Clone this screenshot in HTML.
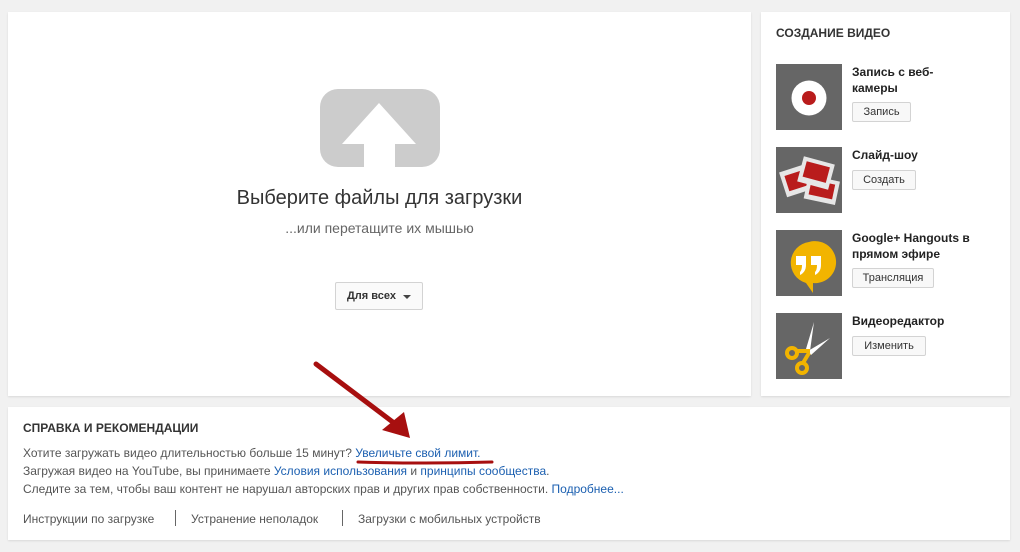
<!DOCTYPE html>
<html><head><meta charset="utf-8"><style>
body{margin:0;width:1020px;height:552px;background:#f1f1f1;font-family:"Liberation Sans",Arial,sans-serif;position:relative;overflow:hidden;color:#333}
.p{position:absolute;background:#fff;box-shadow:0 1px 2px rgba(0,0,0,.1)}
.a{position:absolute;white-space:nowrap}
.btn{position:absolute;border:1px solid #d3d3d3;background:#f8f8f8;border-radius:2px;font-size:11px;color:#333;text-align:center;box-sizing:border-box;line-height:18px;height:20px}
.th{position:absolute;left:776px;width:66px;height:66px;background:#666}
.lbl{position:absolute;left:852px;font-size:12px;font-weight:bold;color:#222;line-height:16px}
a{color:#1b5fb0;text-decoration:none}
.t{font-size:12px;color:#555}
</style></head><body>
<div class="p" style="left:8px;top:12px;width:743px;height:384px"></div>
<div class="p" style="left:761px;top:12px;width:249px;height:384px"></div>
<div class="p" style="left:8px;top:407px;width:1002px;height:133px"></div>

<svg class="a" style="left:320px;top:89px" width="120" height="78" viewBox="0 0 120 78">
<rect x="0" y="0" width="120" height="78" rx="18" fill="#ccc"/>
<path d="M59 14 L96 55 H75 V78 H44 V55 H22Z" fill="#fff"/>
</svg>
<div class="a" style="left:0;width:759px;text-align:center;top:187px;font-size:20px;color:#333">Выберите файлы для загрузки</div>
<div class="a" style="left:0;width:759px;text-align:center;top:220px;font-size:14px;color:#666">...или перетащите их мышью</div>
<div class="btn" style="left:335px;top:282px;width:88px;height:28px;line-height:26px;font-weight:bold;background:#fafafa">Для всех <span style="display:inline-block;border:4px solid transparent;border-top:4px solid #444;vertical-align:-4px;margin-left:4px"></span></div>

<div class="a" style="left:776px;top:26px;font-size:12px;font-weight:bold;color:#333">СОЗДАНИЕ ВИДЕО</div>
<div class="th" style="top:64px"><svg width="66" height="66"><circle cx="33" cy="34" r="17.5" fill="#fff"/><circle cx="33" cy="34" r="7" fill="#b91c1c"/></svg></div>
<div class="lbl" style="top:64px">Запись с веб-<br>камеры</div>
<div class="btn" style="left:852px;top:102px;width:59px">Запись</div>

<div class="th" style="top:147px"><svg width="66" height="66">
<g transform="rotate(-18 22 32)"><rect x="6" y="20" width="32" height="26" fill="#e6e6e6"/><rect x="10" y="25" width="24" height="16" fill="#b91c1c"/></g>
<g transform="rotate(12 46 42)"><rect x="30" y="31" width="32" height="24" fill="#e6e6e6"/><rect x="34" y="35" width="24" height="15" fill="#b91c1c"/></g>
<g transform="rotate(15 40 26)"><rect x="24" y="13" width="32" height="26" fill="#e6e6e6"/><rect x="28" y="17" width="24" height="16" fill="#b91c1c"/></g>
</svg></div>
<div class="lbl" style="top:147px">Слайд-шоу</div>
<div class="btn" style="left:852px;top:170px;width:64px">Создать</div>

<div class="th" style="top:230px"><svg width="66" height="66"><path d="M33 12A21 21 0 1 1 37 53V63L30 53A21 21 0 0 1 33 12Z" fill="#f2b400"/>
<rect x="20" y="26" width="10" height="9" fill="#fff"/><path d="M26 35h4q0 7-6 10v-3q2-2 2-7z" fill="#fff"/>
<rect x="35" y="26" width="10" height="9" fill="#fff"/><path d="M41 35h4q0 7-6 10v-3q2-2 2-7z" fill="#fff"/></svg></div>
<div class="lbl" style="top:230px">Google+ Hangouts в<br>прямом эфире</div>
<div class="btn" style="left:852px;top:268px;width:82px">Трансляция</div>

<div class="th" style="top:313px"><svg width="66" height="66"><path d="M38 9 L30 36 L34 38Z M54 25 L32 38 L35 42Z" fill="#fff"/>
<g stroke="#f2b400" stroke-width="4" fill="none"><circle cx="16" cy="40" r="5"/><circle cx="26" cy="55" r="5"/><path d="M20 38 L34 38 M27 50 L33 40"/></g></svg></div>
<div class="lbl" style="top:313px">Видеоредактор</div>
<div class="btn" style="left:852px;top:336px;width:74px">Изменить</div>

<div class="a" style="left:23px;top:421px;font-size:12px;font-weight:bold;color:#333">СПРАВКА И РЕКОМЕНДАЦИИ</div>
<div class="a t" style="left:23px;top:446px">Хотите загружать видео длительностью больше 15 минут? <a>Увеличьте свой лимит.</a></div>
<div class="a t" style="left:23px;top:464px">Загружая видео на YouTube, вы принимаете <a>Условия использования</a> и <a>принципы сообщества</a>.</div>
<div class="a t" style="left:23px;top:482px">Следите за тем, чтобы ваш контент не нарушал авторских прав и других прав собственности. <a>Подробнее...</a></div>
<div class="a t" style="left:23px;top:512px">Инструкции по загрузке</div>
<div class="a" style="left:175px;top:510px;width:1px;height:16px;background:#666"></div>
<div class="a t" style="left:191px;top:512px">Устранение неполадок</div>
<div class="a" style="left:342px;top:510px;width:1px;height:16px;background:#666"></div>
<div class="a t" style="left:358px;top:512px">Загрузки с мобильных устройств</div>

<svg class="a" style="left:0;top:0" width="1020" height="552">
<path d="M358 462 Q425 464 492 462" stroke="#a70f0f" stroke-width="3" fill="none" stroke-linecap="round"/>
<path d="M316 364 L398 426" stroke="#a70f0f" stroke-width="5" stroke-linecap="round"/>
<path d="M410 438 L382 430 L404 412Z" fill="#a70f0f"/>
</svg>
</body></html>
